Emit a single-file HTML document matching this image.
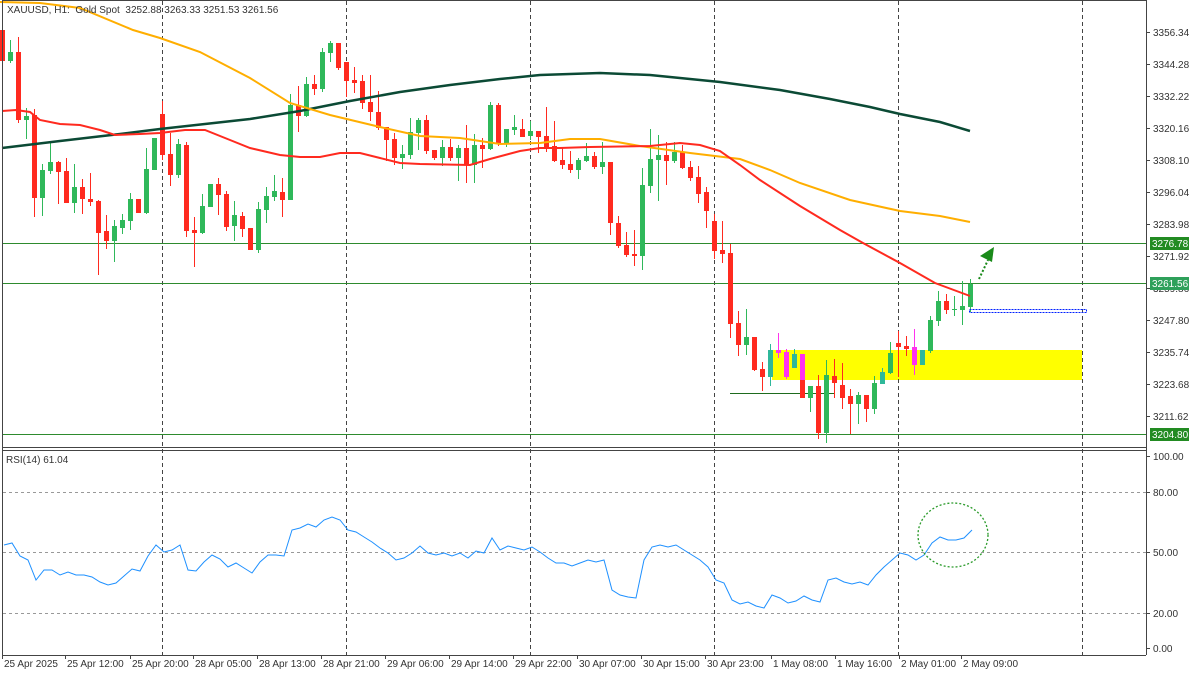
<!DOCTYPE html>
<html><head><meta charset="utf-8">
<style>
html,body{margin:0;padding:0;background:#fff;width:1200px;height:675px;overflow:hidden}
svg{display:block;font-family:"Liberation Sans",Arial,sans-serif}
</style></head>
<body>
<svg id="s" width="1200" height="675" viewBox="0 0 1200 675" xmlns="http://www.w3.org/2000/svg">
<rect width="1200" height="675" fill="#fff"/>
<rect x="772" y="350" width="310" height="30" fill="#ffff00"/>
<g id="grid"></g>
<line x1="2" y1="243.5" x2="1146" y2="243.5" stroke="#2e8b2e" stroke-width="1"/>
<line x1="2" y1="283.5" x2="1146" y2="283.5" stroke="#2e8b2e" stroke-width="1"/>
<line x1="2" y1="434.5" x2="1146" y2="434.5" stroke="#2e8b2e" stroke-width="1"/>
<line x1="730" y1="393.5" x2="834" y2="393.5" stroke="#1e6b1e" stroke-width="1"/>
<g id="candles"></g>
<polyline fill="none" stroke="#0b4a35" stroke-width="2.5" points="2,148 60,141 120,134 160,129 250,119 300,111 350,101 400,92 450,85 500,79 540,75 600,73 650,75 720,82 780,90 830,99 870,107 900,114 940,122 970,131"/>
<polyline fill="none" stroke="#ffae00" stroke-width="2" points="0,2 40,3 80,8 133,30 160,38 200,52 250,78 290,103 330,115 380,127 420,136 460,138 500,144 540,143 570,139 600,139 640,146 690,153 740,159 770,170 800,183 850,200 900,211 940,216 970,222"/>
<polyline fill="none" stroke="#ff2a1f" stroke-width="2" points="2,111 16,110 30,112 40,120 60,124 80,125 100,130 115,135 140,134 160,133 185,130 205,130 230,140 250,148 280,155 300,157 320,157 340,153 360,153 380,158 400,163 420,164 470,165 490,159 520,151 540,148 560,148 590,147 650,146 680,143 700,145 720,151 740,165 760,180 800,206 840,230 863,243 900,263 935,283 970,296"/>
<rect x="969.5" y="309.5" width="117" height="3" fill="none" stroke="#0020ff" stroke-width="1" stroke-dasharray="2,1"/>
<line x1="979" y1="279" x2="988" y2="260" stroke="#1a8a1a" stroke-width="2" stroke-dasharray="2,2"/>
<polygon points="994,247 980,256 992,262" fill="#1a8a1a"/>
<line x1="2" y1="447.5" x2="1146" y2="447.5" stroke="#444"/>
<line x1="2" y1="450.5" x2="1146" y2="450.5" stroke="#444"/>
<line x1="2.5" y1="0" x2="2.5" y2="655" stroke="#444"/>
<line x1="2" y1="0.5" x2="1146" y2="0.5" stroke="#444"/>
<line x1="1146.5" y1="0" x2="1146.5" y2="655" stroke="#444"/>
<line x1="2" y1="655.5" x2="1146" y2="655.5" stroke="#444"/>
<line x1="3" y1="492.5" x2="1146" y2="492.5" stroke="#999" stroke-dasharray="3,3"/>
<line x1="3" y1="552.5" x2="1146" y2="552.5" stroke="#999" stroke-dasharray="3,3"/>
<line x1="3" y1="613.5" x2="1146" y2="613.5" stroke="#999" stroke-dasharray="3,3"/>
<polyline id="rsi" fill="none" stroke="#1e90ff" stroke-width="1"/>
<ellipse cx="953" cy="535" rx="35" ry="32" fill="none" stroke="#2a9a2a" stroke-width="1.3" stroke-dasharray="2,2"/>
<g id="axis" font-size="10" fill="#333"></g>
<text x="7" y="13" font-size="10" fill="#333">XAUUSD, H1:&#160; Gold Spot&#160; 3252.88 3263.33 3251.53 3261.56</text>
<text x="6" y="463" font-size="10" fill="#333">RSI(14) 61.04</text>
</svg>
<script>
var NS="http://www.w3.org/2000/svg";
function el(p,t,a,txt){var e=document.createElementNS(NS,t);for(var k in a)e.setAttribute(k,a[k]);if(txt!=null)e.textContent=txt;p.appendChild(e);return e;}
var g=document.getElementById('grid');
[162,346,530,714,898,1082].forEach(function(x){el(g,'line',{x1:x+.5,y1:1,x2:x+.5,y2:655,stroke:'#444','stroke-dasharray':'4,3'});});
var D=[
['r',30,61,28,61],['g',52,61,40,63],['r',52,120,37,123],['g',116,120,108,139],['r',115,198,109,217],['g',170,198,164,216],['g',162,171,142,174],['r',162,172,161,204],['r',171,203,158,203],['g',187,203,164,213],
['r',187,199,179,214],['r',199,202,173,206],['r',201,233,200,275],['r',231,241,215,249],['g',226,241,220,262],['g',220,228,214,234],['g',199,221,193,230],['r',199,213,199,213],['g',169,213,148,214],['g',138,170,138,170],
['r',114,155,101,160],['r',154,175,133,186],['g',144,175,139,178],['r',145,231,142,237],['r',230,233,217,267],['g',206,233,194,234],['g',184,207,184,207],['r',184,195,178,215],['r',194,227,191,231],['g',215,226,201,241],
['r',216,229,212,237],['r',228,250,228,250],['g',209,250,202,253],['g',196,210,187,223],['g',191,197,175,201],['r',192,200,178,217],['g',105,200,94,200],['r',105,116,86,132],['g',84,116,77,117],['r',84,89,75,95],
['g',52,89,48,92],['g',43,53,41,62],['r',43,68,43,70],['r',62,81,62,97],['r',80,83,67,93],['r',81,103,75,109],['r',102,112,75,121],['r',112,128,91,130],['r',127,140,127,161],['r',139,158,133,165],
['g',154,158,145,169],['g',132,155,118,159],['g',120,133,118,150],['r',120,151,115,154],['r',150,158,150,160],['g',147,158,140,166],['r',147,158,139,161],['g',148,158,145,181],['r',148,165,125,183],['g',145,165,134,183],
['r',145,149,138,168],['g',105,149,102,150],['r',105,143,103,146],['g',129,143,129,147],['g',127,130,115,135],['r',129,137,119,137],['g',131,136,121,140],['r',131,137,131,153],['r',136,147,107,152],['r',146,161,121,162],
['r',160,165,147,169],['r',164,170,151,173],['g',160,170,158,179],['g',156,161,143,162],['r',156,167,152,169],['g',162,167,142,174],['r',162,223,162,235],['r',223,246,216,248],['r',245,255,232,257],['r',254,256,230,266],
['g',185,256,168,270],['g',159,186,129,193],['g',155,160,135,201],['r',155,161,142,185],['g',152,161,142,163],['r',152,168,145,169],['r',167,178,161,181],['r',177,194,166,203],['r',192,211,187,228],['r',221,251,214,259],
['r',250,254,221,263],['r',253,324,244,338],['r',323,345,311,356],['g',337,345,309,355],['r',337,370,337,371],['r',369,377,362,391],['t',350,377,344,386],['m',350,353,333,358],['m',352,377,349,379],['t',354,368,349,368],
['mr',354,398,354,398],['g',386,398,386,412],['r',386,433,375,439],['g',375,433,360,443],['r',376,383,359,398],['r',385,398,363,409],['r',396,404,389,434],['g',395,404,392,424],['r',395,409,395,422],['g',383,409,376,414],
['t',372,384,368,384],['g',353,373,342,374],['r',343,347,331,377],['r',346,349,336,356],['m',347,365,329,375],['t',350,365,350,365],['g',320,351,316,353],['g',301,321,291,326],['r',301,310,294,314],['g',309,310,296,316],
['g',306,310,281,325],['g',284,307,279,312]];
var C={r:'#ff2a1f',g:'#2fb85a',m:'#ff33ee',t:'#2fb89a',mr:'#ff2a1f'};
var cg=document.getElementById('candles');
D.forEach(function(d,i){var x=2+8*i;var c=C[d[0]];
 el(cg,'rect',{x:x,y:d[3],width:1,height:Math.max(1,d[4]-d[3]),fill:c});
 el(cg,'rect',{x:x-2,y:d[1],width:5,height:Math.max(1,d[2]-d[1]),fill:c});
 if(d[0]=='mr')el(cg,'rect',{x:x-2,y:d[1],width:5,height:26,fill:'#ff33ee'});
});
var R=[545,543,556,560,580,570,570,575,572,575,575,577,582,585,583,576,569,571,556,545,552,550,545,570,571,562,555,559,567,563,568,573,562,555,555,556,530,528,524,527,520,517,520,530,532,537,542,548,553,560,558,553,546,553,555,553,556,553,558,551,553,538,550,546,548,550,547,552,558,563,563,566,563,560,562,560,590,595,597,598,560,547,545,547,545,550,555,560,567,580,583,600,604,602,606,608,595,598,603,601,596,600,602,580,578,582,584,582,585,575,567,560,553,555,560,555,543,537,540,540,538,530];
document.getElementById('rsi').setAttribute('points',R.map(function(y,i){return (4+8*i)+','+y;}).join(' '));
var ax=document.getElementById('axis');
[['3356.34',32],['3344.28',64],['3332.22',96],['3320.16',128],['3308.10',160],['3296.04',192],['3283.98',224],['3271.92',256],['3259.86',288],['3247.80',320],['3235.74',352],['3223.68',384],['3211.62',416],['100.00',456],['80.00',492],['50.00',552],['20.00',613],['0.00',648]].forEach(function(a){
 el(ax,'line',{x1:1146,y1:a[1]+.5,x2:1150,y2:a[1]+.5,stroke:'#444'});
 el(ax,'text',{x:1153,y:a[1]+4},a[0]);});
[['3276.78',243,'#228b22'],['3261.56',283,'#2ea05a'],['3204.80',434,'#228b22']].forEach(function(a){
 el(ax,'rect',{x:1150,y:a[1]-6,width:39,height:13,fill:a[2]});
 el(ax,'text',{x:1152,y:a[1]+4,fill:'#fff'},a[0]);});
[['25 Apr 2025',2],['25 Apr 12:00',65],['25 Apr 20:00',130],['28 Apr 05:00',193],['28 Apr 13:00',257],['28 Apr 21:00',321],['29 Apr 06:00',385],['29 Apr 14:00',449],['29 Apr 22:00',513],['30 Apr 07:00',577],['30 Apr 15:00',641],['30 Apr 23:00',705],['1 May 08:00',771],['1 May 16:00',835],['2 May 01:00',899],['2 May 09:00',961]].forEach(function(a){
 el(ax,'line',{x1:a[1]+.5,y1:655,x2:a[1]+.5,y2:659,stroke:'#444'});
 el(ax,'text',{x:a[1]+2,y:667},a[0]);});
</script>
</body></html>
